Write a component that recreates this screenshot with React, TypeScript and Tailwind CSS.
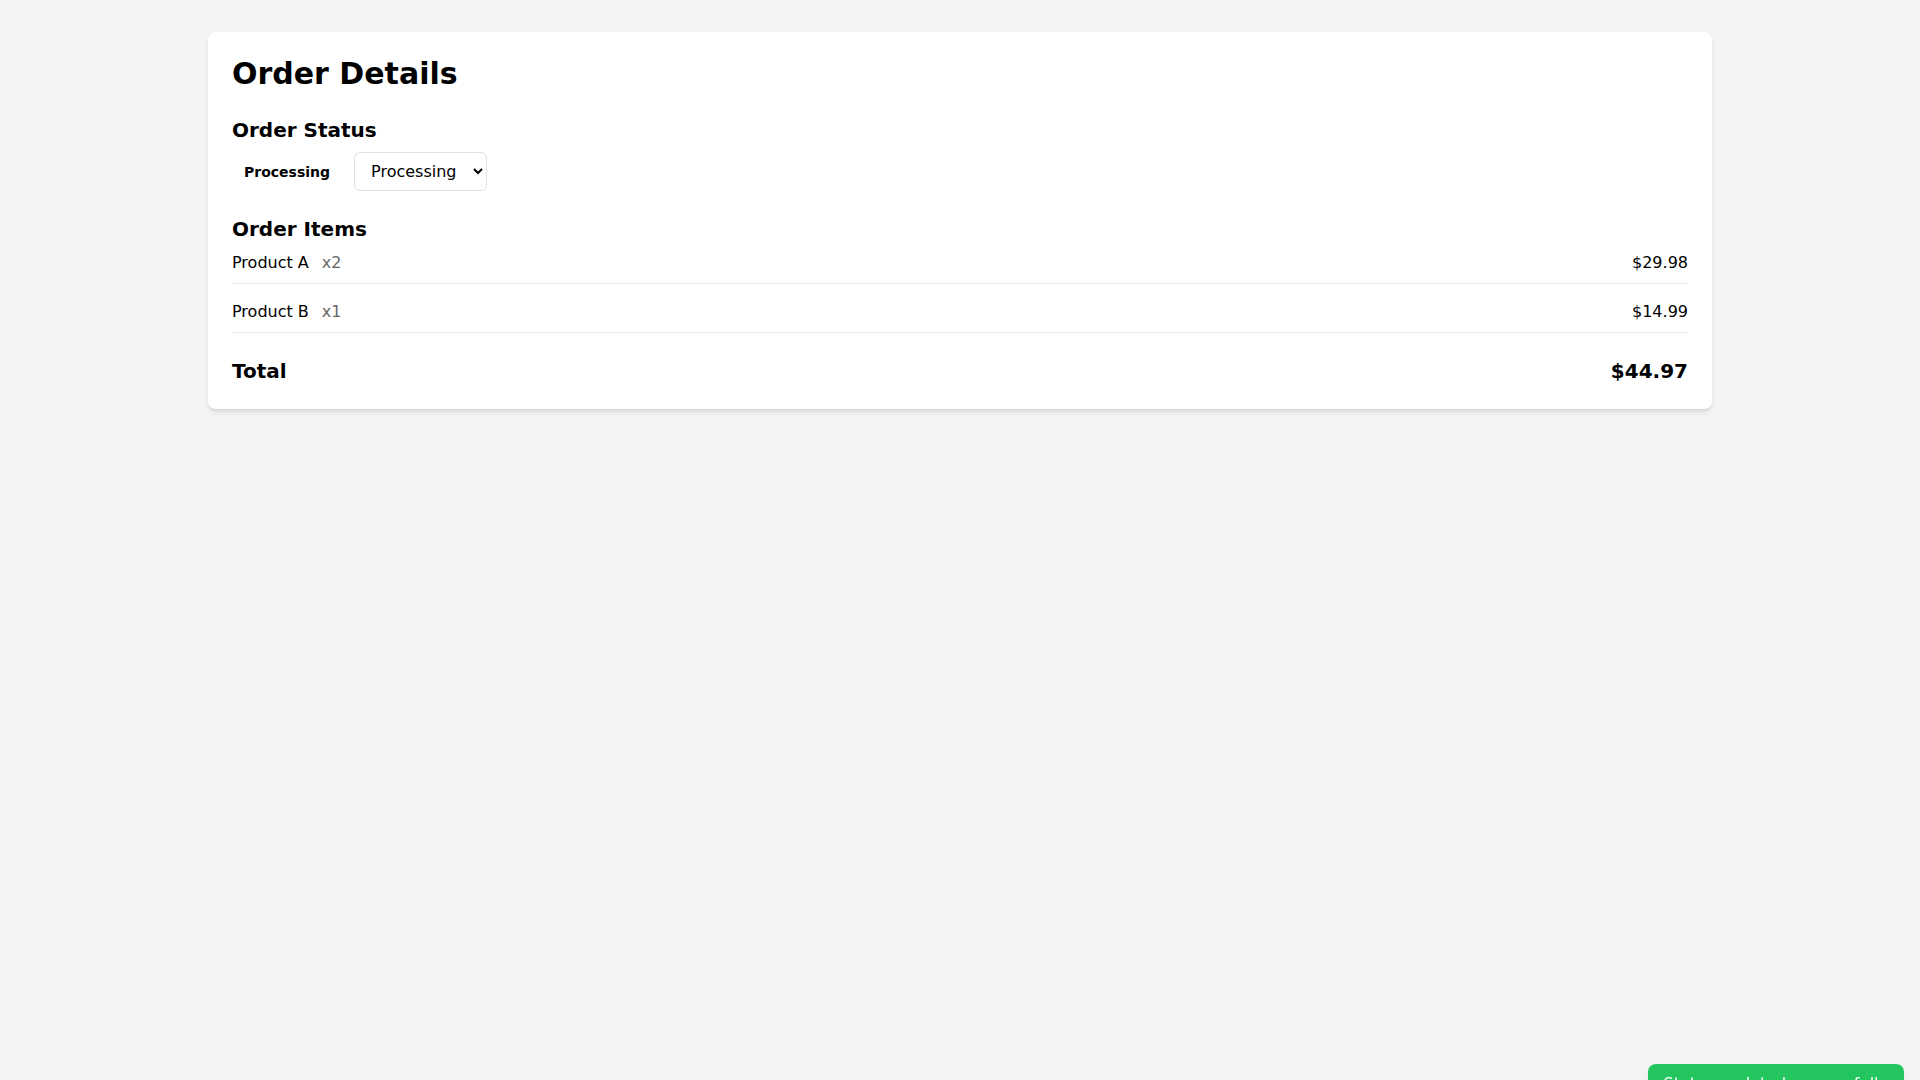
import { useState } from 'react';

type OrderItem = {
    id: number;
    name: string;
    quantity: number;
    price: number;
};

const items: OrderItem[] = [
    { id: 1, name: 'Product A', quantity: 2, price: 14.99 },
    { id: 2, name: 'Product B', quantity: 1, price: 14.99 },
];

const statuses = ['Pending', 'Processing', 'Shipped', 'Delivered', 'Cancelled'];

export default function App() {
    const [status, setStatus] = useState('Processing');
    const [showToast, setShowToast] = useState(true);

    const total = items.reduce((sum, item) => sum + item.price * item.quantity, 0);

    const handleChange = (value: string) => {
        setStatus(value);
        setShowToast(true);
    };

    return (
        <div className="min-h-screen bg-gray-100 text-black font-['DejaVu_Sans',sans-serif]">
            <div className="container mx-auto px-4 py-8">
                <div className="bg-white rounded-lg shadow-md p-6">
                    <h1 className="text-3xl font-bold mb-6">Order Details</h1>

                    <div className="mb-6">
                        <h2 className="text-xl font-bold mb-2">Order Status</h2>
                        <div className="flex items-center gap-3">
                            <span className="px-3 py-1 text-sm font-bold">{status}</span>
                            <select
                                value={status}
                                onChange={(e) => handleChange(e.target.value)}
                                className="h-[39px] w-[133px] border border-[#dfe1e5] rounded-md px-3 text-base bg-white"
                            >
                                {statuses.map((s) => (
                                    <option key={s} value={s}>
                                        {s}
                                    </option>
                                ))}
                            </select>
                        </div>
                    </div>

                    <div>
                        <h2 className="text-xl font-bold">Order Items</h2>
                        <div className="space-y-2">
                            {items.map((item) => (
                                <div key={item.id} className="flex justify-between py-2 border-b border-[#e5e7eb]">
                                    <div>
                                        <span>{item.name}</span>
                                        <span className="ml-[13px] text-[#666666]">x{item.quantity}</span>
                                    </div>
                                    <span>${(item.price * item.quantity).toFixed(2)}</span>
                                </div>
                            ))}
                        </div>
                        <div className="flex justify-between mt-6 text-xl font-bold">
                            <span>Total</span>
                            <span>${total.toFixed(2)}</span>
                        </div>
                    </div>
                </div>
            </div>

            {showToast && (
                <div
                    onClick={() => setShowToast(false)}
                    className="fixed right-4 top-[1064px] bg-[#22c55e] text-white text-base px-4 py-2 rounded-lg shadow-lg"
                >
                    Status updated successfully
                </div>
            )}
        </div>
    );
}
